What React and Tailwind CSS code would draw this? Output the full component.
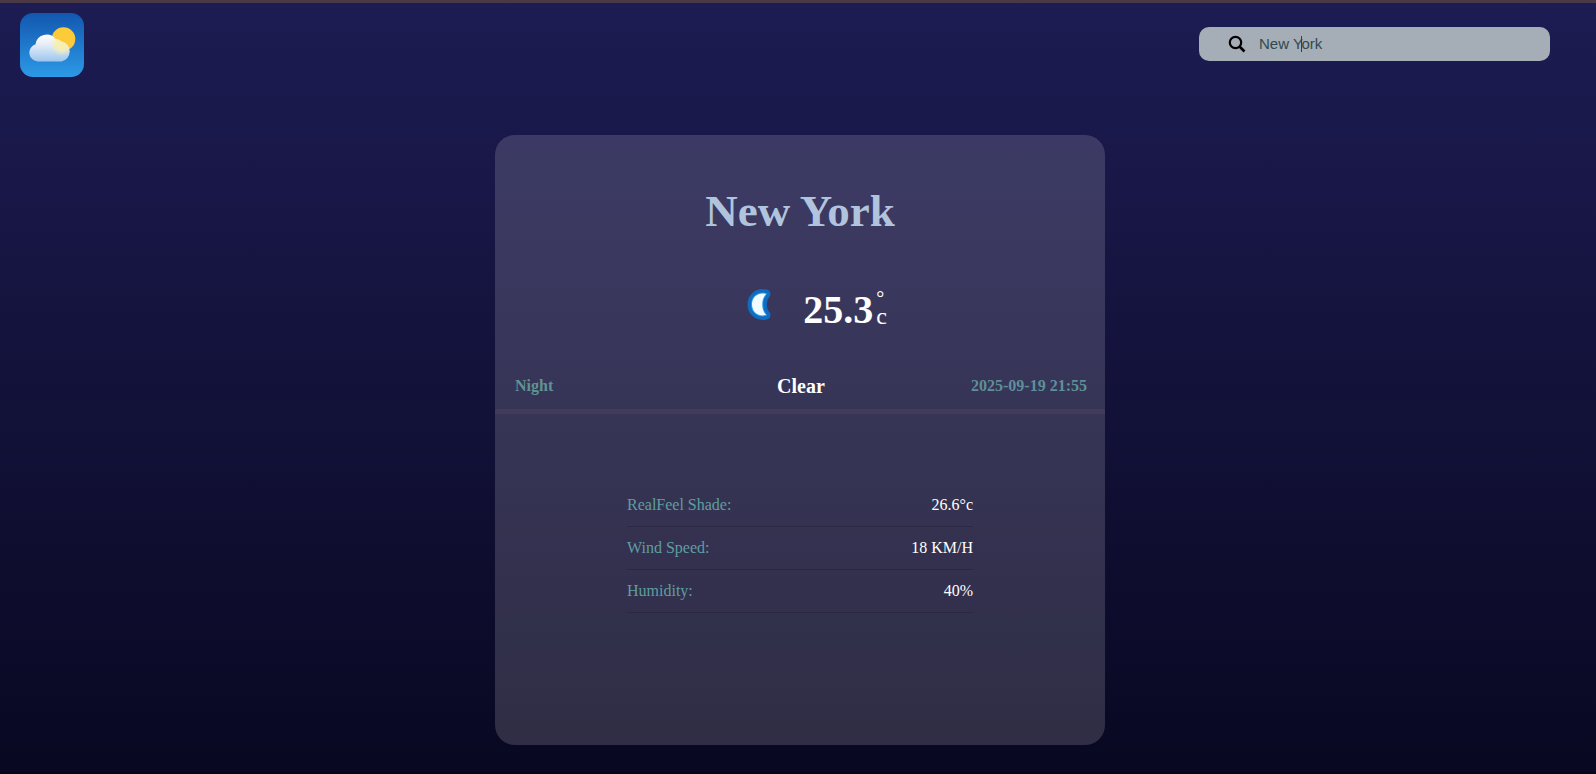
import React, { useState } from "react";

const readings = [
  { label: "RealFeel Shade:", value: "26.6°c" },
  { label: "Wind Speed:", value: "18 KM/H" },
  { label: "Humidity:", value: "40%" },
];

function WeatherLogo() {
  return (
    <svg viewBox="0 0 64 64" className="size-16" role="img" aria-label="Weather">
      <defs>
        <linearGradient id="sky" x1="0" y1="0" x2="0" y2="1">
          <stop offset="0" stopColor="#1257b0" />
          <stop offset="1" stopColor="#2c9ae6" />
        </linearGradient>
        <linearGradient id="cloud" x1="0" y1="0" x2="0" y2="1">
          <stop offset="0" stopColor="#ffffff" />
          <stop offset="0.4" stopColor="#e2ebf8" />
          <stop offset="1" stopColor="#9cc6ee" />
        </linearGradient>
        <radialGradient id="glow" cx="42" cy="31" r="12" gradientUnits="userSpaceOnUse">
          <stop offset="0" stopColor="#f8efae" />
          <stop offset="0.5" stopColor="#f8efae" stopOpacity="0.85" />
          <stop offset="1" stopColor="#f8efae" stopOpacity="0" />
        </radialGradient>
        <clipPath id="cloudClip">
          <path d="M18 48.500a8.800 8.800 0 0 1-2.500-17.200a11.200 11.200 0 0 1 20-5.300a10 10 0 0 1 6 2.500a10.200 10.200 0 0 1 0 20z" />
        </clipPath>
      </defs>
      <rect width="64" height="64" rx="13" fill="url(#sky)" />
      <circle cx="43.500" cy="26" r="11.800" fill="#fdcb3a" />
      <path
        d="M18 48.500a8.800 8.800 0 0 1-2.500-17.200a11.200 11.200 0 0 1 20-5.300a10 10 0 0 1 6 2.500a10.200 10.200 0 0 1 0 20z"
        fill="url(#cloud)"
      />
      <circle cx="42" cy="31" r="12" fill="url(#glow)" clipPath="url(#cloudClip)" />
    </svg>
  );
}

function MoonIcon() {
  const crescent = "M37 21C28 19 23 25 23 31.500C23 38 28 44 37 42C32 37 32 26 37 21z";
  return (
    <svg viewBox="0 0 64 64" className="size-16" strokeLinejoin="round" role="img" aria-label="Clear night">
      <path d={crescent} fill="#0f6cc0" stroke="#0f6cc0" strokeWidth="9" />
      <path d={crescent} fill="#f2fbff" stroke="#2f97e6" strokeWidth="2" />
      <path d={crescent} fill="#f2fbff" />
    </svg>
  );
}

function SearchIcon() {
  return (
    <svg viewBox="0 0 18 18" className="size-[18px] shrink-0" fill="none" stroke="#000" aria-hidden="true">
      <circle cx="7.500" cy="7.500" r="5.700" strokeWidth="2.200" />
      <path d="M11.500 11.500L16.500 16.500" strokeWidth="2.600" />
    </svg>
  );
}

export default function App() {
  const [city, setCity] = useState("New York");

  return (
    <div className="min-h-screen border-t-3 border-b-2 border-t-[#4c3946] border-b-[#04041a] bg-linear-to-b from-[#1d1c53] to-[#090822] pb-[26px] font-['Liberation_Serif',serif] text-white">
      <header className="flex items-center justify-between pt-2.5 pr-[46px] pl-5">
        <WeatherLogo />
        <form
          className="relative mb-0.5 flex h-[34px] w-[351px] items-center gap-[13px] rounded-[10px] bg-[#a5aeb6] pl-[29px]"
          onSubmit={(event) => event.preventDefault()}
        >
          <label htmlFor="city" aria-label="Search city">
            <SearchIcon />
          </label>
          <input
            id="city"
            type="text"
            value={city}
            onChange={(event) => setCity(event.target.value)}
            className="min-w-0 flex-1 bg-transparent font-['Liberation_Sans',sans-serif] text-[15px] text-[#2f4a4f] outline-none"
          />
          <span className="absolute top-[9px] left-[102px] h-4 w-px bg-[#333f44]" />
        </form>
      </header>

      <main className="mx-auto mt-[58px] min-h-[610px] w-full max-w-[610px] translate-x-0.5 rounded-[20px] bg-[#ece6f0]/17">
        <h1 className="pt-[50px] text-center text-[45px] leading-[52px] font-bold text-[#b0c4de]">
          {city}
        </h1>
        <div className="mt-9 flex items-center justify-center pl-4">
          <MoonIcon />
          <div className="flex items-center pt-2.5 pl-2.5">
            <span className="text-[40px] leading-[46px] font-bold">25.3</span>
            <span className="flex flex-col pb-1.5 pl-[3px] leading-[18px]">
              <span className="text-xl leading-[18px]">°</span>
              <span className="text-2xl leading-[18px]">c</span>
            </span>
          </div>
        </div>
        <div className="mt-[37px] grid grid-cols-3 items-center border-b-5 border-[#443b58] pr-[18px] pb-[11px] pl-5 font-bold">
          <span className="text-base text-[#5f9294]">Night</span>
          <span className="text-center text-xl leading-6">Clear</span>
          <time className="text-right text-base text-[#5f8f98]">2025-09-19 21:55</time>
        </div>
        <dl className="mx-auto mt-[70px] w-[346px]">
          {readings.map((reading) => (
            <div
              key={reading.label}
              className="flex justify-between border-b border-[#2a2944] py-3 text-base leading-[18px]"
            >
              <dt className="text-[#5f9ea0]">{reading.label}</dt>
              <dd>{reading.value}</dd>
            </div>
          ))}
        </dl>
      </main>
    </div>
  );
}
